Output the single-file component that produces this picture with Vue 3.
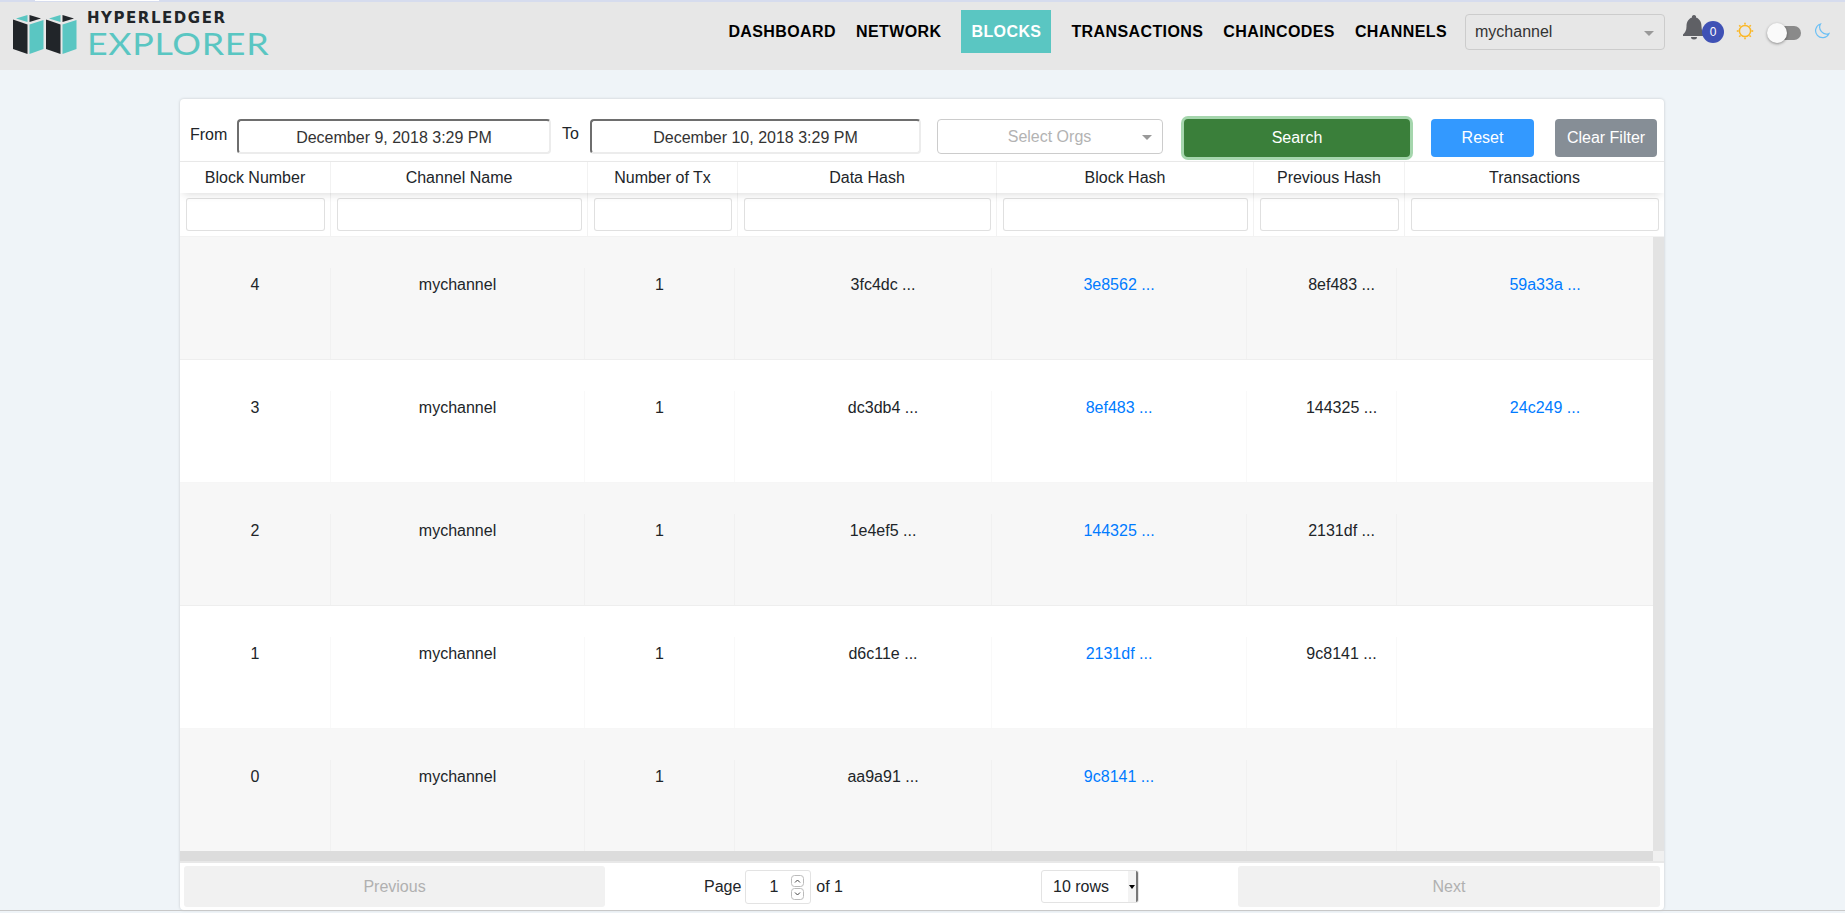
<script setup>
const navItems = [
  { label: 'DASHBOARD' },
  { label: 'NETWORK' },
  { label: 'BLOCKS', active: true },
  { label: 'TRANSACTIONS' },
  { label: 'CHAINCODES' },
  { label: 'CHANNELS' }
]
const headers = ['Block Number', 'Channel Name', 'Number of Tx', 'Data Hash', 'Block Hash', 'Previous Hash', 'Transactions']
const rows = [
  { n: 4, data: '3fc4dc ...', block: '3e8562 ...', prev: '8ef483 ...', tx: '59a33a ...' },
  { n: 3, data: 'dc3db4 ...', block: '8ef483 ...', prev: '144325 ...', tx: '24c249 ...' },
  { n: 2, data: '1e4ef5 ...', block: '144325 ...', prev: '2131df ...', tx: '' },
  { n: 1, data: 'd6c11e ...', block: '2131df ...', prev: '9c8141 ...', tx: '' },
  { n: 0, data: 'aa9a91 ...', block: '9c8141 ...', prev: '', tx: '' }
]
const sunRays = [0, 45, 90, 135, 180, 225, 270, 315]
</script>

<template>
  <div class="page">
    <div class="strip"><div class="strip-tab"></div></div>
    <header class="nav">
      <div class="logo">
        <svg class="logo-mark" width="70" height="42" viewBox="0 0 70 42">
          <g v-for="dx in [0, 33]" :key="dx" :transform="`translate(${dx} 0)`">
            <path d="M1 6.5 L15.5 11.5 V41 L1 36 Z" fill="#212529" />
            <path d="M17.5 11.5 L31.5 7 V36 L17.5 41 Z" fill="#5ac6c2" />
            <path d="M4 5.5 L15.5 2 V9 Z" fill="#5ac6c2" />
            <path d="M17.5 2 L29 5.5 L17.5 9 Z" fill="#212529" />
          </g>
        </svg>
        <div class="logo-text">
          <span class="logo-top">HYPERLEDGER</span>
          <span class="logo-bottom">EXPLORER</span>
        </div>
      </div>
      <nav class="links">
        <a v-for="item in navItems" :key="item.label" class="link" :class="{ active: item.active }">{{ item.label }}</a>
      </nav>
      <div class="channel">
        <span>mychannel</span>
        <i class="caret"></i>
      </div>
      <div class="bell">
        <svg width="24" height="26" viewBox="0 0 24 26">
          <path d="M12 1 a2 2 0 0 1 2 2.6 C18 5 19.5 8.5 19.5 12.5 C19.5 16.5 21 18.5 23 20.5 V22 H1 V20.5 C3 18.5 4.5 16.5 4.5 12.5 C4.5 8.5 6 5 10 3.6 A2 2 0 0 1 12 1 Z M9 23 H15 A3 2.5 0 0 1 9 23 Z" fill="#5f6065" />
        </svg>
        <span class="badge">0</span>
      </div>
      <svg class="sun" width="18" height="18" viewBox="0 0 18 18">
        <circle cx="9" cy="9" r="5.6" fill="none" stroke="#fbb726" stroke-width="1.5" />
        <path v-for="a in sunRays" :key="a" d="M9 0.8 V2.6" stroke="#fbb726" stroke-width="1.6" :transform="`rotate(${a} 9 9)`" />
      </svg>
      <div class="toggle"><span class="track"></span><span class="thumb"></span></div>
      <svg class="moon" width="16" height="16" viewBox="0 0 16 16">
        <path d="M6.5 1 A7 7 0 1 0 15 10.5 A6.8 6.8 0 0 1 6.5 1 Z" fill="none" stroke="#6cc0f5" stroke-width="1.2" />
      </svg>
    </header>

    <main class="content">
      <section class="card">
        <div class="filters">
          <label class="label first">From</label>
          <input class="date date-from" value="December 9, 2018 3:29 PM" />
          <label class="label second">To</label>
          <input class="date date-to" value="December 10, 2018 3:29 PM" />
          <div class="orgs"><span>Select Orgs</span><i class="caret"></i></div>
          <button class="btn search">Search</button>
          <button class="btn reset">Reset</button>
          <button class="btn clear">Clear Filter</button>
        </div>

        <div class="thead">
          <div v-for="h in headers" :key="h" class="th">{{ h }}</div>
        </div>
        <div class="tfilter">
          <div v-for="h in headers" :key="h" class="tf"><input class="tf-input" /></div>
        </div>

        <div class="tbody-wrap">
          <div class="tbody">
            <div v-for="(r, i) in rows" :key="r.n" class="tr" :class="{ odd: i % 2 === 0 }">
              <div class="td">{{ r.n }}</div>
              <div class="td">mychannel</div>
              <div class="td">1</div>
              <div class="td shift">{{ r.data }}</div>
              <div class="td"><a class="hash">{{ r.block }}</a></div>
              <div class="td shift">{{ r.prev }}</div>
              <div class="td shift"><a class="hash">{{ r.tx }}</a></div>
            </div>
          </div>
          <div class="vscroll"></div>
        </div>
        <div class="hscroll"><div class="hbar"></div><div class="corner"></div></div>

        <div class="pager">
          <button class="page-btn">Previous</button>
          <div class="pager-center">
            <div class="page-info">
              <span>Page</span>
              <div class="page-box">
                <span class="page-num">1</span>
                <div class="spin">
                  <svg width="13" height="12" viewBox="0 0 13 12"><rect x="0.5" y="0.5" width="12" height="11" rx="3" fill="#fff" stroke="#bbb" /><path d="M4 7.5 L6.5 5 L9 7.5" fill="none" stroke="#444" /></svg>
                  <svg width="13" height="12" viewBox="0 0 13 12"><rect x="0.5" y="0.5" width="12" height="11" rx="3" fill="#fff" stroke="#bbb" /><path d="M4 4.5 L6.5 7 L9 4.5" fill="none" stroke="#444" /></svg>
                </div>
              </div>
              <span>of 1</span>
            </div>
            <div class="rows-select">
              <span class="rows-text">10 rows</span>
              <span class="rows-arrow"><i></i></span>
            </div>
          </div>
          <button class="page-btn">Next</button>
        </div>
      </section>
    </main>
    <div class="bottom-line"></div>
  </div>
</template>

<style>
html, body { margin: 0; height: 913px; overflow: hidden; background: #eff4f8; }
</style>

<style scoped>
.page {
  height: 913px;
  overflow: hidden;
  background: #eff4f8;
  font-family: "Liberation Sans", Arial, sans-serif;
  font-size: 16px;
  color: #212529;
  display: flex;
  flex-direction: column;
}
.strip { height: 2px; background: #d6dcee; flex: none; }
.strip-tab { height: 1px; width: 124px; margin-left: 35px; background: #fff; }

.nav {
  flex: none;
  height: 68px;
  padding-right: 15px;
  background: #e7e7e7;
  display: flex;
  align-items: flex-start;
}
.logo { display: flex; align-items: flex-start; margin-left: 12px; }
.logo-mark { margin-top: 11px; display: block; }
.logo-text { margin-left: 5px; display: flex; flex-direction: column; }
.logo-top {
  margin-top: 7px;
  height: 19px;
  line-height: 19px;
  font-family: "DejaVu Sans", sans-serif;
  font-weight: 700;
  font-size: 15px;
  letter-spacing: 1.55px;
  color: #212529;
}
.logo-bottom {
  height: 31px;
  line-height: 31px;
  font-family: Lato, sans-serif;
  font-size: 31px;
  letter-spacing: 0.6px;
  color: #5ac6c2;
  transform: scaleX(1.155);
  transform-origin: left center;
}
.links { margin-left: auto; display: flex; padding-top: 8px; }
.link {
  display: block;
  height: 43px;
  line-height: 43px;
  padding: 0 10px;
  font-weight: 700;
  letter-spacing: 0.4px;
  color: #000;
}
.link.active {
  background: #5ac6c2;
  color: #fff;
  margin: 0 10px;
}
.channel {
  width: 200px;
  height: 36px;
  box-sizing: border-box;
  margin-top: 12px;
  margin-left: 8px;
  padding: 0 10px 0 9px;
  border: 1px solid #ccc;
  border-radius: 4px;
  display: flex;
  align-items: center;
  justify-content: space-between;
  color: #333;
}
.caret {
  display: block;
  width: 0;
  height: 0;
  margin-top: 2px;
  border-left: 5px solid transparent;
  border-right: 5px solid transparent;
  border-top: 5px solid #999;
}
.bell { position: relative; width: 42px; height: 30px; margin: 12px 0 0 17px; }
.bell svg { display: block; }
.badge {
  position: absolute;
  left: 20px;
  top: 7px;
  width: 22px;
  height: 22px;
  border-radius: 50%;
  background: #3f51b5;
  color: #fff;
  font-size: 12px;
  line-height: 22px;
  text-align: center;
}
.sun { margin: 20px 0 0 12px; }
.toggle { position: relative; width: 34px; height: 20px; margin: 21px 0 0 13px; }
.track {
  position: absolute;
  left: 6px;
  right: 0;
  top: 3px;
  height: 14px;
  border-radius: 7px;
  background: #8a8a8a;
}
.thumb {
  position: absolute;
  left: 0;
  top: 0;
  width: 20px;
  height: 20px;
  border-radius: 50%;
  background: #fafafa;
  box-shadow: 0 1px 3px rgba(0, 0, 0, 0.4);
}
.moon { margin: 21px 0 0 13px; }

.content { flex: none; height: 840px; padding: 29px 181px 0 180px; box-sizing: border-box; }
.card {
  height: 811px;
  background: #fff;
  border-radius: 4px;
  box-shadow: 0 0 3px rgba(0, 0, 0, 0.18);
  display: flex;
  flex-direction: column;
  overflow: hidden;
}
.filters {
  flex: none;
  height: 62px;
  box-sizing: border-box;
  padding: 20px 0 0 10px;
  display: flex;
  align-items: flex-start;
}
.label { line-height: 24px; margin-top: 4px; }
.label.first { width: 47px; }
.label.second { width: 28px; margin-left: 11px; margin-top: 3px; }
.date {
  box-sizing: border-box;
  height: 35px;
  padding: 2px 0 0;
  font: inherit;
  color: #333;
  text-align: center;
  background: #fff;
  border-width: 2px;
  border-style: solid;
  border-color: #6e6e6e #ececec #ececec #6e6e6e;
  border-radius: 4px;
}
.date-from { width: 314px; }
.date-to { width: 331px; }
.orgs {
  box-sizing: border-box;
  width: 226px;
  height: 35px;
  margin-left: 16px;
  padding: 0 10px 0 0;
  border: 1px solid #ccc;
  border-radius: 4px;
  display: flex;
  align-items: center;
  color: #b3b3b3;
}
.orgs span { flex: 1; text-align: center; margin-left: 19px; }
.btn {
  box-sizing: border-box;
  height: 38px;
  border: 0;
  border-radius: 4px;
  padding: 0;
  font: inherit;
  color: #fff;
}
.search { width: 226px; margin-left: 21px; background: #3a7f3a; box-shadow: 0 0 0 3px #a5d6ad; }
.reset { width: 103px; margin-left: 21px; background: #3399ff; }
.clear { width: 102px; margin-left: 21px; background: #868e96; }

.thead, .tfilter {
  flex: none;
  display: grid;
  grid-template-columns: 151px 257px 150px 259px 257px 151px 259px;
}
.thead {
  height: 31px;
  border-top: 1px solid #e8e8e8;
  box-shadow: 0 4px 8px -3px rgba(0, 0, 0, 0.15);
  position: relative;
}
.th {
  line-height: 31px;
  text-align: center;
  border-right: 1px solid rgba(0, 0, 0, 0.05);
}
.th:last-child { border-right: 0; }
.tfilter {
  height: 44px;
  box-sizing: border-box;
  border-bottom: 1px solid rgba(0, 0, 0, 0.05);
}
.tf {
  padding: 5px 5px 0 6px;
  border-right: 1px solid rgba(0, 0, 0, 0.05);
}
.tf:last-child { border-right: 0; }
.tf-input {
  display: block;
  width: 100%;
  height: 33px;
  box-sizing: border-box;
  padding: 0;
  border: 1px solid rgba(0, 0, 0, 0.12);
  border-radius: 3px;
  background: #fff;
}

.tbody-wrap { flex: none; height: 614px; display: flex; }
.tbody { flex: 1; }
.tr {
  height: 123px;
  box-sizing: border-box;
  display: grid;
  grid-template-columns: 151px 254px 150px 257px 255px 150px 256px;
  border-bottom: 1px solid rgba(0, 0, 0, 0.035);
  background: #fff;
}
.tr:last-child { height: 122px; border-bottom: 0; }
.tr.odd { background: #f7f7f7; }
.td {
  margin-top: 31px;
  padding-top: 5px;
  line-height: 24px;
  text-align: center;
  border-right: 1px solid rgba(0, 0, 0, 0.025);
}
.td:last-child { border-right: 0; }
.td.shift { padding-left: 40px; }
.hash { color: #007bff; }
.vscroll { width: 11px; flex: none; background: #e3e3e3; }
.hscroll { flex: none; height: 10px; display: flex; }
.hbar { flex: 1; background: #dcdcdc; }
.corner { width: 11px; background: #f0f0f0; }

.pager {
  flex: none;
  height: 44px;
  border-top: 2px solid #e8e8e8;
  padding: 3px 4px 0;
  display: grid;
  grid-template-columns: 421px 1fr 422px;
  align-items: start;
}
.page-btn {
  height: 41px;
  border: 0;
  border-radius: 3px;
  padding: 0;
  background: #f1f1f1;
  font: inherit;
  color: #b0b0b0;
}
.pager-center {
  display: flex;
  justify-content: space-around;
  align-items: flex-start;
  padding-top: 4px;
}
.page-info { display: flex; align-items: center; width: 139px; height: 34px; white-space: nowrap; }
.page-box {
  box-sizing: border-box;
  width: 69px;
  height: 34px;
  margin: 0 5px 0 4px;
  border: 1px solid #e3e3e3;
  border-radius: 3px;
  display: flex;
  align-items: center;
}
.page-num { flex: 1; text-align: center; padding-left: 10px; }
.spin { display: flex; flex-direction: column; gap: 1px; margin-right: 6px; }
.spin svg { display: block; }
.rows-select {
  box-sizing: border-box;
  width: 98px;
  height: 33px;
  border: 1px solid #e3e3e3;
  border-radius: 3px;
  display: flex;
  align-items: stretch;
  overflow: hidden;
}
.rows-text { flex: 1; line-height: 31px; padding-left: 11px; }
.rows-arrow {
  width: 10px;
  background: #f3f3f3;
  border-right: 2px solid #777;
  box-sizing: border-box;
  display: flex;
  align-items: center;
  justify-content: center;
}
.rows-arrow i {
  display: block;
  width: 0;
  height: 0;
  border-left: 3px solid transparent;
  border-right: 3px solid transparent;
  border-top: 4px solid #000;
}
.bottom-line { height: 1px; background: #c8c8c8; flex: none; }
</style>
